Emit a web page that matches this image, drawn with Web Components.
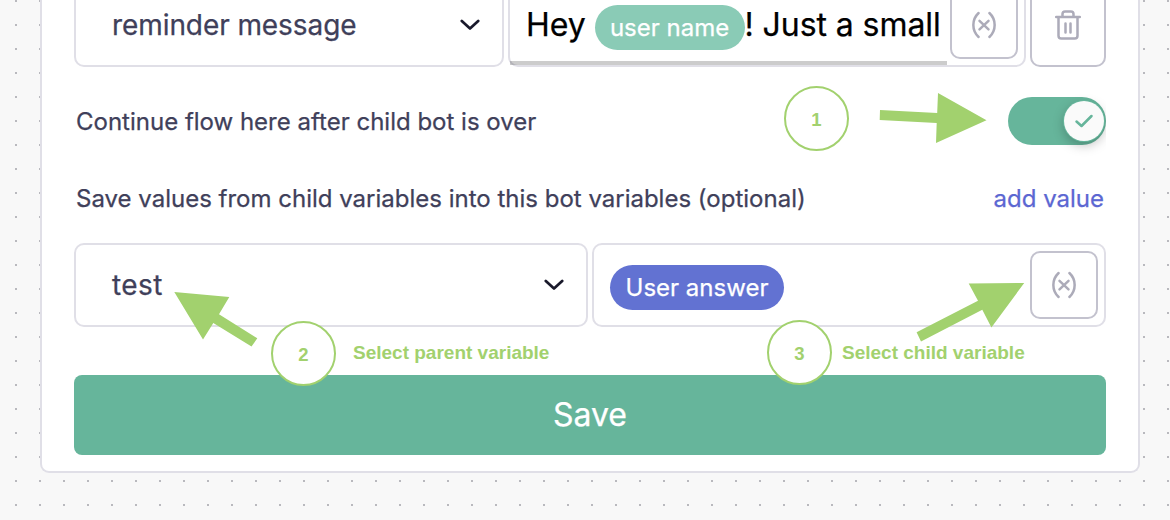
<!DOCTYPE html>
<html lang="en">
<head>
<meta charset="utf-8">
<title>Bot flow settings</title>
<style>
html,body{margin:0;width:1170px;height:520px;overflow:hidden;background:#f8f8f8}
body{font-family:Inter,"Liberation Sans",sans-serif;color:#40405a;-webkit-text-stroke:.25px currentColor}
</style>
</head>
<body>
<flow-canvas></flow-canvas>
<script>
function define(name, html) {
  const t = document.createElement('template');
  t.innerHTML = html;
  customElements.define(name, class extends HTMLElement {
    constructor() {
      super();
      this.attachShadow({ mode: 'open' }).appendChild(t.content.cloneNode(true));
    }
  });
}

define('chevron-icon', `<style>:host{display:block;width:20px;height:12px}svg{display:block}</style>
<svg width="20" height="12" viewBox="0 0 20 12"><path d="M1.800 2l8.200 7.600L18.200 2" fill="none" stroke="#19192b" stroke-width="2.700" stroke-linecap="round" stroke-linejoin="round"/></svg>`);

define('select-field', `<style>
:host{display:flex;box-sizing:border-box;height:84px;border:2px solid #e0dfe7;border-radius:10px;background:#fff;align-items:center;justify-content:space-between;padding:0 22px 0 36px;font-size:28px;line-height:40px;letter-spacing:var(--ls,0)}
</style><span><slot></slot></span><chevron-icon></chevron-icon>`);

define('variable-button', `<style>
:host{display:flex;flex:none;box-sizing:border-box;width:68px;height:68px;border:2px solid #c3c2ce;border-radius:10px;background:#fff;align-items:center;justify-content:center}
svg{display:block}
</style><svg width="28" height="30" viewBox="0 0 28 30" fill="none" stroke="#acabb9" stroke-width="2.500" stroke-linecap="round"><path d="M8.600 3C1.600 9.500 1.600 20.500 8.600 27M19.400 3C26.400 9.500 26.400 20.500 19.400 27M9.500 10.800l9 8.600M18.500 10.800l-9 8.600"/></svg>`);

define('trash-button', `<style>
:host{display:flex;box-sizing:border-box;width:76px;height:84px;border:2px solid #c3c2ce;border-radius:10px;background:#fff;align-items:center;justify-content:center}
svg{display:block}
</style><svg width="28" height="32" viewBox="0 0 28 32" fill="none" stroke="#acabb9" stroke-width="2.500" stroke-linecap="round" stroke-linejoin="round"><path d="M2.200 8h23.600M4.500 8v18.700q0 2.800 2.800 2.800h13.400q2.800 0 2.800-2.800V8M8.500 8V5q0-2.600 2.600-2.600h5.800q2.600 0 2.600 2.600V8M11.500 14.500v9M16.500 14.500v9"/></svg>`);

define('variable-chip', `<style>
:host{display:inline-block;box-sizing:border-box;flex:none;height:45px;width:var(--w);border-radius:23px;background:var(--bg);color:#fff;font-size:24px;line-height:45px;text-align:center;letter-spacing:0;white-space:nowrap}
</style><slot></slot>`);

define('message-field', `<style>
:host{display:flex;position:relative;box-sizing:border-box;height:84px;border:2px solid #e0dfe7;border-radius:10px;background:#fff;align-items:center;justify-content:space-between;padding:0 6px 0 16px}
.text{display:flex;align-items:center;color:#000;font-size:32px;letter-spacing:-.07px;white-space:pre;line-height:40px}
:host([scrollable])::after{content:"";position:absolute;left:0;bottom:0;width:437px;height:4px;background:rgba(0,0,0,.2)}
</style><div class="text"><slot></slot></div><variable-button></variable-button>`);

define('toggle-switch', `<style>
:host{display:block;width:98px;height:76px;padding:14px 0 0;box-sizing:border-box;overflow:hidden}
.track{display:flex;justify-content:flex-end;align-items:center;box-sizing:border-box;width:98px;height:48px;border-radius:24px;background:#66b59b;padding-right:2px}
.knob{display:flex;align-items:center;justify-content:center;width:40px;height:40px;border-radius:50%;background:#fafafa;box-shadow:0 0 0 1px #66b59b,0 4px 12px rgba(0,0,0,.26)}
</style><div class="track"><div class="knob"><svg width="20" height="16" viewBox="0 0 20 16"><path d="M2.500 8.500l5 4.500L17.500 3" fill="none" stroke="#66b59b" stroke-width="2.500" stroke-linecap="round" stroke-linejoin="round"/></svg></div></div>`);

define('setting-row', `<style>
:host{display:flex;align-items:center;justify-content:space-between;font-size:24px;line-height:32px;padding-left:2px;white-space:nowrap}
.label{padding-top:var(--drop,0)}
</style><span class="label"><slot></slot></span><slot name="action"></slot>`);

define('save-button', `<style>
:host{display:flex;height:80px;border-radius:8px;background:#66b59b;color:#fff;align-items:center;justify-content:center;font-size:32px;line-height:40px}
</style><span><slot></slot></span>`);

define('step-marker', `<style>
:host{display:flex;position:absolute;box-sizing:border-box;width:65px;height:65px;border:2px solid #a2d16e;border-radius:50%;background:#fff;color:#a2d16e;align-items:center;justify-content:center;font:bold 18.500px "Liberation Sans",sans-serif;padding-top:2px;-webkit-text-stroke:0}
</style><slot></slot>`);

define('step-note', `<style>
:host{display:block;position:absolute;color:#a2d16e;font:bold 19px/24px "Liberation Sans",sans-serif;white-space:nowrap;-webkit-text-stroke:0}
</style><slot></slot>`);

define('guide-overlay', `<style>
:host{display:block;position:absolute;inset:0}
svg{position:absolute;inset:0}
</style>
<svg width="1170" height="520" fill="#a2d16e">
<path d="M880 110L937.200 113L938 93L986.500 120.300L936 143L936.700 123L879.700 120Z"/>
<path d="M174.300 292L229.300 297L219 314.300L257.300 338.300L251.500 346.500L213.300 323L203 339.500Z"/>
<path d="M1024.200 283L968.700 283.600L978 300.700L916.600 332.300L921 341.500L982.300 309.700L991.400 327.500Z"/>
</svg>
<step-marker style="left:784px;top:86px">1</step-marker>
<step-marker style="left:271px;top:321px">2</step-marker>
<step-marker style="left:767px;top:320px">3</step-marker>
<step-note style="left:353px;top:341px">Select parent variable</step-note>
<step-note style="left:842px;top:341px">Select child variable</step-note>`);

define('flow-card', `<style>
:host{display:flow-root;box-sizing:border-box;width:1100px;height:473px;margin-left:40px;border:2px solid #e0dfe7;border-top:0;border-radius:0 0 9px 9px;background:#fff;padding:0 32px}
.top{display:grid;grid-template-columns:430px 518px 76px;gap:4px;margin-top:-17px}
.continue{margin-top:16px;height:76px;--drop:2px}
.values{margin-top:24px}
.bottom{display:grid;grid-template-columns:1fr 1fr;gap:4px;margin-top:28px}
save-button{margin-top:48px}
.link{color:#5c67d2;margin-right:2px}
</style>
<div class="top">
<select-field style="--ls:-.08px">reminder message</select-field>
<message-field scrollable><span>Hey </span><variable-chip style="--w:150px;--bg:#8acbb6;margin:5px 0 0">user name</variable-chip><span>! Just a small</span></message-field>
<trash-button></trash-button>
</div>
<setting-row class="continue">Continue flow here after child bot is over<toggle-switch slot="action"></toggle-switch></setting-row>
<setting-row class="values">Save values from child variables into this bot variables (optional)<span slot="action" class="link">add value</span></setting-row>
<div class="bottom">
<select-field style="--ls:.4px">test</select-field>
<message-field><variable-chip style="--w:174px;--bg:#6272d2;margin-top:5px">User answer</variable-chip></message-field>
</div>
<save-button>Save</save-button>`);

define('flow-canvas', `<style>
:host{display:flow-root;position:relative;width:1170px;height:520px;overflow:hidden;background:#f8f8f8}
.dots{position:absolute;inset:0}
flow-card{position:relative}
</style>
<svg class="dots" width="1170" height="520"><defs><pattern id="dots" x="15" width="24" height="24" patternUnits="userSpaceOnUse"><rect width="2" height="2" fill="#b9b9be"/></pattern></defs><rect width="1170" height="520" fill="url(#dots)"/></svg>
<flow-card></flow-card><guide-overlay></guide-overlay>`);
</script>
</body>
</html>
